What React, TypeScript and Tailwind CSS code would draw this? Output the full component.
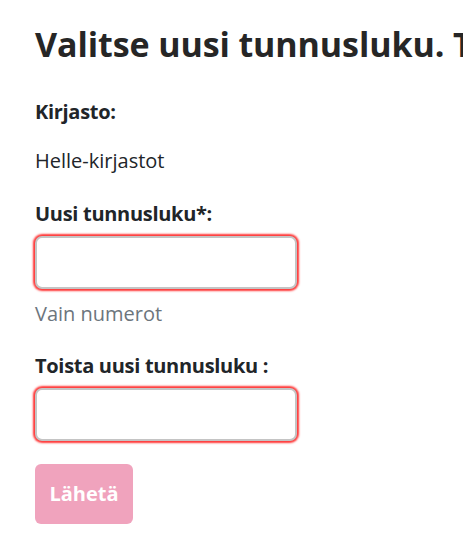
export default function App() {
  return (
    <div
      className="min-h-screen bg-white overflow-hidden text-[#212529]"
      style={{ fontFamily: '"Open Sans", "Noto Sans", sans-serif' }}
    >
      <div className="pl-[35px] pt-[21px]">
        <h1 className="text-[34px] leading-[46px] font-bold whitespace-nowrap text-[#262626] tracking-[-0.1px]">
          Valitse uusi tunnusluku. Tunnusluvun pituus
        </h1>

        <form className="mt-[30px]">
          <div className="text-[20px] leading-[30px] font-bold tracking-[-0.3px]">Kirjasto:</div>
          <div className="mt-[19px] text-[20px] leading-[30px]">Helle-kirjastot</div>

          <label className="block mt-[23px] text-[20px] leading-[30px] font-bold tracking-[-0.3px]">
            Uusi tunnusluku*:
          </label>
          <input
            type="password"
            className="block mt-[7px] w-[262px] h-[53px] rounded-[7px] border-2 border-[#c4c4c4] bg-white shadow-[0_0_2px_2px_rgba(255,20,20,0.85)] outline-none"
          />
          <div className="mt-[10px] text-[20px] leading-[30px] text-[#6c757d]">Vain numerot</div>

          <label className="block mt-[22px] text-[20px] leading-[30px] font-bold tracking-[-0.3px]">
            Toista uusi tunnusluku :
          </label>
          <input
            type="password"
            className="block mt-[7px] w-[262px] h-[53px] rounded-[7px] border-2 border-[#c4c4c4] bg-white shadow-[0_0_2px_2px_rgba(255,20,20,0.85)] outline-none"
          />

          <button
            type="button"
            className="block mt-[23px] w-[98px] h-[60px] rounded-[6px] bg-[#f0a3bd] text-white text-[20px] font-bold"
          >
            Lähetä
          </button>
        </form>
      </div>
    </div>
  );
}
